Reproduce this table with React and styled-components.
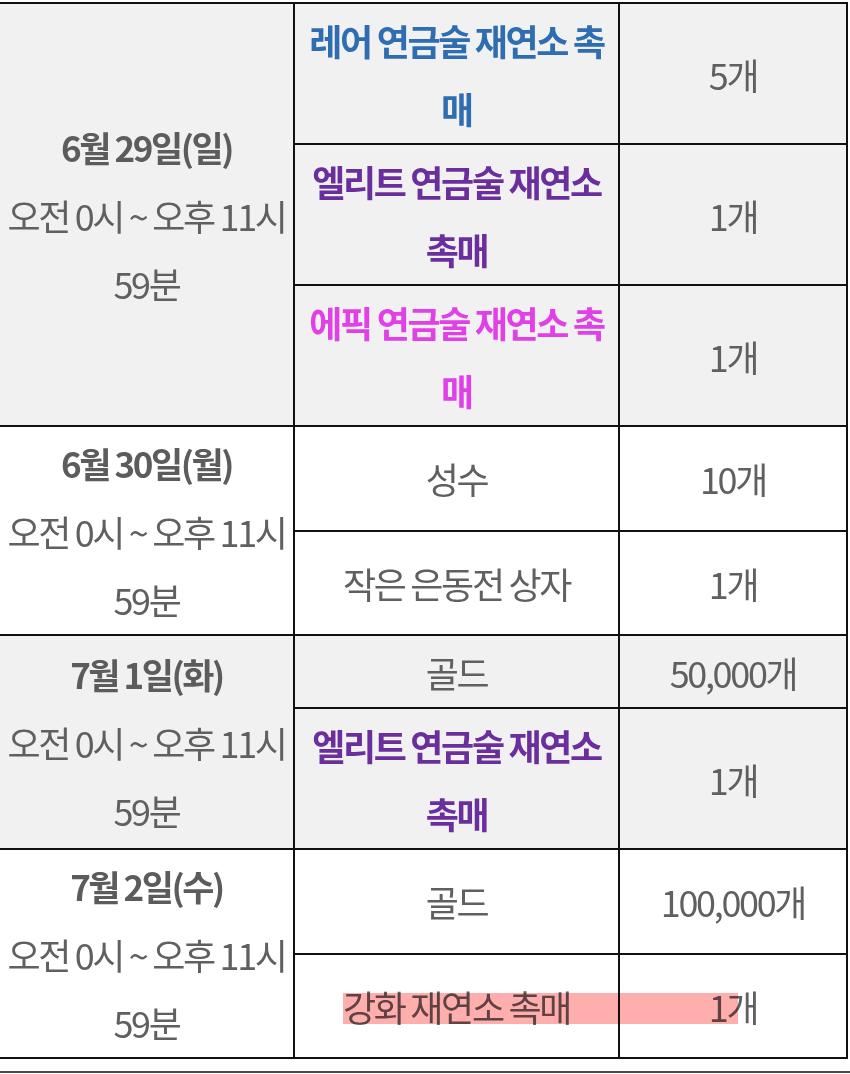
import React from "react";
import styled, { createGlobalStyle, css } from "styled-components";

const GlobalStyle = createGlobalStyle`
  html, body {
    margin: 0;
    padding: 0;
    background: #ffffff;
  }
  body {
    font-family: "Noto Sans CJK KR", "Noto Sans", sans-serif;
    color: #606060;
  }
`;

const Page = styled.div`
  position: relative;
  width: 850px;
  overflow: hidden;
  padding-top: 2px;
`;

const Table = styled.table`
  margin-left: -2px;
  width: 848px;
  border-collapse: collapse;
  table-layout: fixed;
`;

const Col = styled.col`
  width: ${(p) => p.$w}px;
`;

const Row = styled.tr`
  background: ${(p) => (p.$shade ? "#f1f1f1" : "#ffffff")};
`;

const Cell = styled.td`
  border: 2px solid #111;
  padding: 1.5px 0;
  text-align: center;
  vertical-align: middle;
  font-size: 36px;
  line-height: 68px;
  letter-spacing: -0.065em;
  color: #606060;
  white-space: nowrap;
`;

const tones = {
  plain: css`
    font-weight: 400;
    color: #606060;
  `,
  rare: css`
    font-weight: 700;
    color: #2f6db2;
  `,
  elite: css`
    font-weight: 700;
    color: #6a2f9c;
  `,
  epic: css`
    font-weight: 700;
    color: #e040e6;
  `,
};

const ItemCell = styled(Cell)`
  ${(p) => tones[p.$tone || "plain"]}
`;

const DateTitle = styled.div`
  font-weight: 700;
  font-size: 35px;
  letter-spacing: -0.07em;
  color: #5c5c5c;
`;

const Highlight = styled.div`
  position: absolute;
  left: 343px;
  top: 993px;
  width: 395px;
  height: 31px;
  background: #ffaeae;
  mix-blend-mode: multiply;
  pointer-events: none;
`;

const Divider = styled.div`
  margin-top: 12px;
  height: 0;
  border-top: 2px solid #4a4a4a;
`;

const schedule = [
  {
    date: "6월 29일(일)",
    shade: true,
    items: [
      { name: ["레어 연금술 재연소 촉", "매"], tone: "rare", qty: "5개" },
      { name: ["엘리트 연금술 재연소", "촉매"], tone: "elite", qty: "1개" },
      { name: ["에픽 연금술 재연소 촉", "매"], tone: "epic", qty: "1개" },
    ],
  },
  {
    date: "6월 30일(월)",
    shade: false,
    items: [
      { name: ["성수"], qty: "10개" },
      { name: ["작은 은동전 상자"], qty: "1개" },
    ],
  },
  {
    date: "7월 1일(화)",
    shade: true,
    items: [
      { name: ["골드"], qty: "50,000개" },
      { name: ["엘리트 연금술 재연소", "촉매"], tone: "elite", qty: "1개" },
    ],
  },
  {
    date: "7월 2일(수)",
    shade: false,
    items: [
      { name: ["골드"], qty: "100,000개" },
      { name: ["강화 재연소 촉매"], qty: "1개" },
    ],
  },
];

const Lines = ({ lines }) =>
  lines.map((line, i) => (
    <React.Fragment key={i}>
      {i > 0 && <br />}
      {line}
    </React.Fragment>
  ));

export default function App() {
  return (
    <Page>
      <GlobalStyle />
      <Table>
        <colgroup>
          <Col $w={295} />
          <Col $w={325} />
          <Col $w={228} />
        </colgroup>
        <tbody>
          {schedule.map((day) =>
            day.items.map((item, i) => (
              <Row key={day.date + i} $shade={day.shade}>
                {i === 0 && (
                  <Cell rowSpan={day.items.length}>
                    <DateTitle>{day.date}</DateTitle>
                    오전 0시 ~ 오후 11시
                    <br />
                    59분
                  </Cell>
                )}
                <ItemCell $tone={item.tone}>
                  <Lines lines={item.name} />
                </ItemCell>
                <Cell>{item.qty}</Cell>
              </Row>
            ))
          )}
        </tbody>
      </Table>
      <Divider />
      <Highlight />
    </Page>
  );
}
